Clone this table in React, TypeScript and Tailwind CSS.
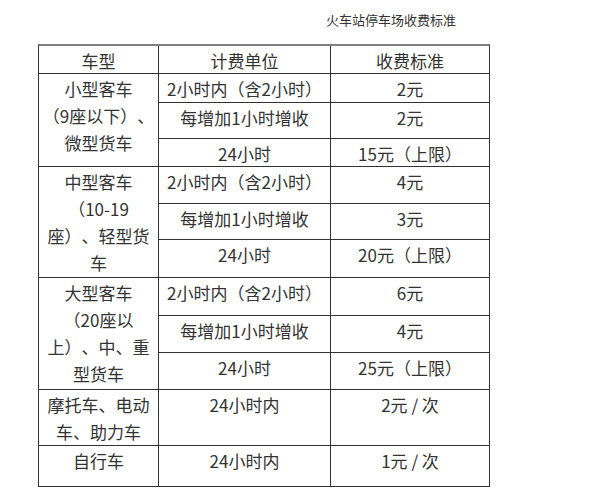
const groups = [
  {
    type: ["小型客车", "（9座以下）、", "微型货车"],
    span: "row-span-3",
    rows: [
      { unit: "2小时内（含2小时）", fee: "2元" },
      { unit: "每增加1小时增收", fee: "2元" },
      { unit: "24小时", fee: "15元（上限）" },
    ],
  },
  {
    type: ["中型客车", "（10-19", "座）、轻型货", "车"],
    span: "row-span-3",
    rows: [
      { unit: "2小时内（含2小时）", fee: "4元" },
      { unit: "每增加1小时增收", fee: "3元" },
      { unit: "24小时", fee: "20元（上限）" },
    ],
  },
  {
    type: ["大型客车", "（20座以", "上）、中、重", "型货车"],
    span: "row-span-3",
    rows: [
      { unit: "2小时内（含2小时）", fee: "6元" },
      { unit: "每增加1小时增收", fee: "4元" },
      { unit: "24小时", fee: "25元（上限）" },
    ],
  },
  {
    type: ["摩托车、电动", "车、助力车"],
    span: "row-span-1",
    rows: [{ unit: "24小时内", fee: "2元 / 次" }],
  },
  {
    type: ["自行车"],
    span: "row-span-1",
    rows: [{ unit: "24小时内", fee: "1元 / 次" }],
  },
];

const single = "bg-white text-center whitespace-nowrap pt-[4px] leading-[21px]";
const multi = "bg-white text-center whitespace-nowrap pt-[1px] leading-[27px]";

export default function App() {
  return (
    <div
      className="w-[610px] h-[500px] bg-white text-[#333] pt-[10px] [text-spacing-trim:space-all]"
      style={{ fontFamily: '"Noto Sans CJK SC", "Noto Sans", sans-serif' }}
    >
      <div className="pl-[326px] text-[13px] leading-[20px]">火车站停车场收费标准</div>

      {/* table: dark 1px grid lines drawn by the gaps, grey top rule */}
      <div className="ml-[38px] mt-[14px] w-fit grid grid-cols-[119px_171px_158px] grid-rows-[27px_28px_35px_27px_36px_35px_37px_37px_36px_36px_55px_40px] gap-px bg-[#333] border border-[#333] border-t-2 border-t-[#808080] text-[17px]">
        <div className={single}>车型</div>
        <div className={single}>计费单位</div>
        <div className={single}>收费标准</div>
        {groups.map((g) => [
          <div key={g.type[0]} className={`${multi} ${g.span}`}>
            {g.type.map((line) => (
              <div key={line}>{line}</div>
            ))}
          </div>,
          ...g.rows.flatMap((r, i) => [
            <div key={`${g.type[0]}-u${i}`} className={single}>{r.unit}</div>,
            <div key={`${g.type[0]}-f${i}`} className={single}>{r.fee}</div>,
          ]),
        ])}
      </div>
    </div>
  );
}
